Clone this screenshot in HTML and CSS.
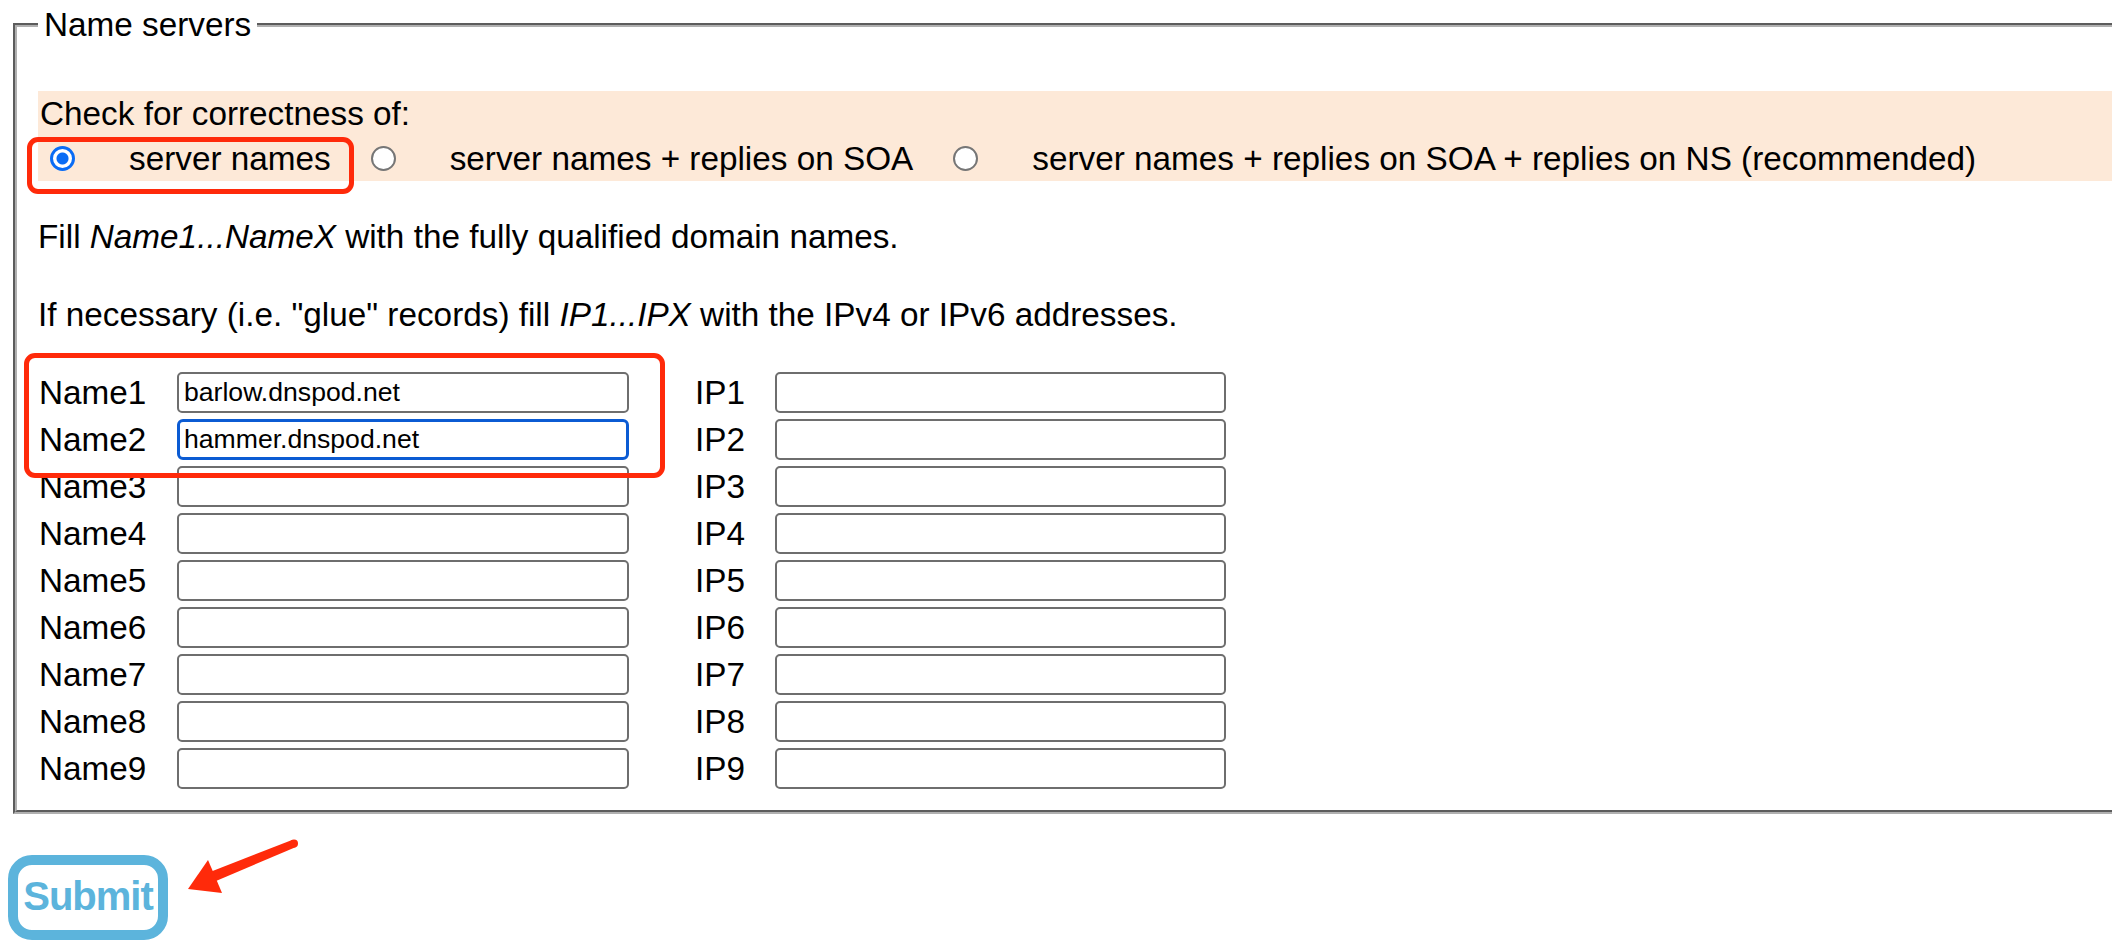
FILE: index.html
```html
<!DOCTYPE html>
<html lang="en">
<head>
<meta charset="utf-8">
<title>Name servers</title>
<link rel="stylesheet" href="styles.css">
</head>
<body>
<form class="page">
  <fieldset class="ns">
    <legend class="ns-legend">Name servers</legend>
    <div class="check">
      <div class="check-title">Check for correctness of:</div>
      <div class="options">
        <label class="opt"><input class="radio" type="radio" name="check" checked><span class="opt-text">server names</span></label>
        <label class="opt"><input class="radio" type="radio" name="check"><span class="opt-text">server names + replies on SOA</span></label>
        <label class="opt"><input class="radio" type="radio" name="check"><span class="opt-text">server names + replies on SOA + replies on NS (recommended)</span></label>
      </div>
    </div>
    <p class="hint">Fill <i>Name1...NameX</i> with the fully qualified domain names.</p>
    <p class="hint">If necessary (i.e. "glue" records) fill <i>IP1...IPX</i> with the IPv4 or IPv6 addresses.</p>
    <div class="grid">
      <span class="lbl">Name1</span><span class="cell"><input class="field" type="text" value="barlow.dnspod.net"></span><span class="lbl">IP1</span><span class="cell"><input class="field" type="text"></span>
      <span class="lbl">Name2</span><span class="cell"><input class="field field-focus" type="text" value="hammer.dnspod.net"></span><span class="lbl">IP2</span><span class="cell"><input class="field" type="text"></span>
      <span class="lbl">Name3</span><span class="cell"><input class="field" type="text"></span><span class="lbl">IP3</span><span class="cell"><input class="field" type="text"></span>
      <span class="lbl">Name4</span><span class="cell"><input class="field" type="text"></span><span class="lbl">IP4</span><span class="cell"><input class="field" type="text"></span>
      <span class="lbl">Name5</span><span class="cell"><input class="field" type="text"></span><span class="lbl">IP5</span><span class="cell"><input class="field" type="text"></span>
      <span class="lbl">Name6</span><span class="cell"><input class="field" type="text"></span><span class="lbl">IP6</span><span class="cell"><input class="field" type="text"></span>
      <span class="lbl">Name7</span><span class="cell"><input class="field" type="text"></span><span class="lbl">IP7</span><span class="cell"><input class="field" type="text"></span>
      <span class="lbl">Name8</span><span class="cell"><input class="field" type="text"></span><span class="lbl">IP8</span><span class="cell"><input class="field" type="text"></span>
      <span class="lbl">Name9</span><span class="cell"><input class="field" type="text"></span><span class="lbl">IP9</span><span class="cell"><input class="field" type="text"></span>
    </div>
  </fieldset>
  <button class="submit" type="button">Submit</button>

  <div class="mark mark-radio"></div>
  <div class="mark mark-names"></div>
  <svg class="arrow" width="2112" height="944" viewBox="0 0 2112 944" aria-hidden="true">
    <polygon points="292,840 296,847 216,881 210,872" fill="#ff2a0a"/>
    <circle cx="294" cy="843.5" r="4" fill="#ff2a0a"/>
    <polygon points="188,889 208,860 214,874 222,893" fill="#ff2a0a"/>
  </svg>
</form>
</body>
</html>
```
FILE: styles.css
```css
html, body {
  margin: 0;
  padding: 0;
  background: #ffffff;
  overflow: hidden;
}

body {
  width: 2112px;
  height: 944px;
  font-family: "Liberation Sans", Arial, Helvetica, sans-serif;
  font-size: 33.3px;
  color: #000;
}

.page {
  position: relative;
  width: 2112px;
  height: 944px;
  padding: 6px 0 0 13px;
  box-sizing: border-box;
}

.ns {
  width: 2240px;
  box-sizing: border-box;
  margin: 0;
  min-width: 0;
  border: 4px groove #b0b0b0;
  padding: 0 0 21px 21px;
}

.ns-legend {
  padding: 0 6px;
  line-height: 38px;
}

.check {
  margin-top: 47px;
  background: #fde9d8;
  padding-left: 2px;
  line-height: 45px;
}

.check-title {
  height: 45px;
}

.options {
  display: flex;
  align-items: center;
  height: 45px;
}

.opt {
  display: flex;
  align-items: center;
}

.radio {
  appearance: none;
  -webkit-appearance: none;
  width: 25px;
  height: 25px;
  margin: 0 54px 0 10px;
  border: 2px solid #767676;
  border-radius: 50%;
  background: #fff;
  box-sizing: border-box;
}

.radio:checked {
  border: 3px solid #0a6cf5;
  background: radial-gradient(circle, #0a6cf5 0 5.5px, #ffffff 6.5px);
}

.opt-text {
  margin-right: 30px;
}

.hint {
  margin: 33px 0 0;
  line-height: 45px;
}

.grid {
  margin-top: 35px;
  display: grid;
  grid-template-columns: 139px 517px 81px 451px;
  row-gap: 6px;
  align-items: center;
}

.lbl {
  line-height: 41px;
  padding-left: 1px;
}

.cell {
  display: flex;
}

.field {
  width: 452px;
  height: 41px;
  box-sizing: border-box;
  border: 2px solid #6e6e6e;
  border-radius: 5px;
  padding: 0 5px;
  font-family: "Liberation Sans", Arial, Helvetica, sans-serif;
  font-size: 26.6px;
  color: #000;
  background: #fff;
  outline: none;
}

.field-focus {
  border: 3px solid #0b5bd3;
  border-radius: 6px;
  padding: 0 4px;
}

.submit {
  display: block;
  margin: 41px 0 0 -5px;
  width: 160px;
  height: 85px;
  box-sizing: border-box;
  border: 10px solid #5cb4dc;
  border-radius: 24px;
  background: #fff;
  color: #5cb4dc;
  font-family: "Liberation Sans", Arial, Helvetica, sans-serif;
  font-weight: bold;
  font-size: 40px;
  letter-spacing: -1px;
  padding: 0 0 2px;
}

.mark {
  position: absolute;
  box-sizing: border-box;
  border: 5px solid #ff2a0a;
  border-radius: 11px;
}

.mark-radio {
  left: 27px;
  top: 137px;
  width: 327px;
  height: 57px;
}

.mark-names {
  left: 24px;
  top: 353px;
  width: 641px;
  height: 125px;
}

.arrow {
  position: absolute;
  left: 0;
  top: 0;
  pointer-events: none;
}
```
